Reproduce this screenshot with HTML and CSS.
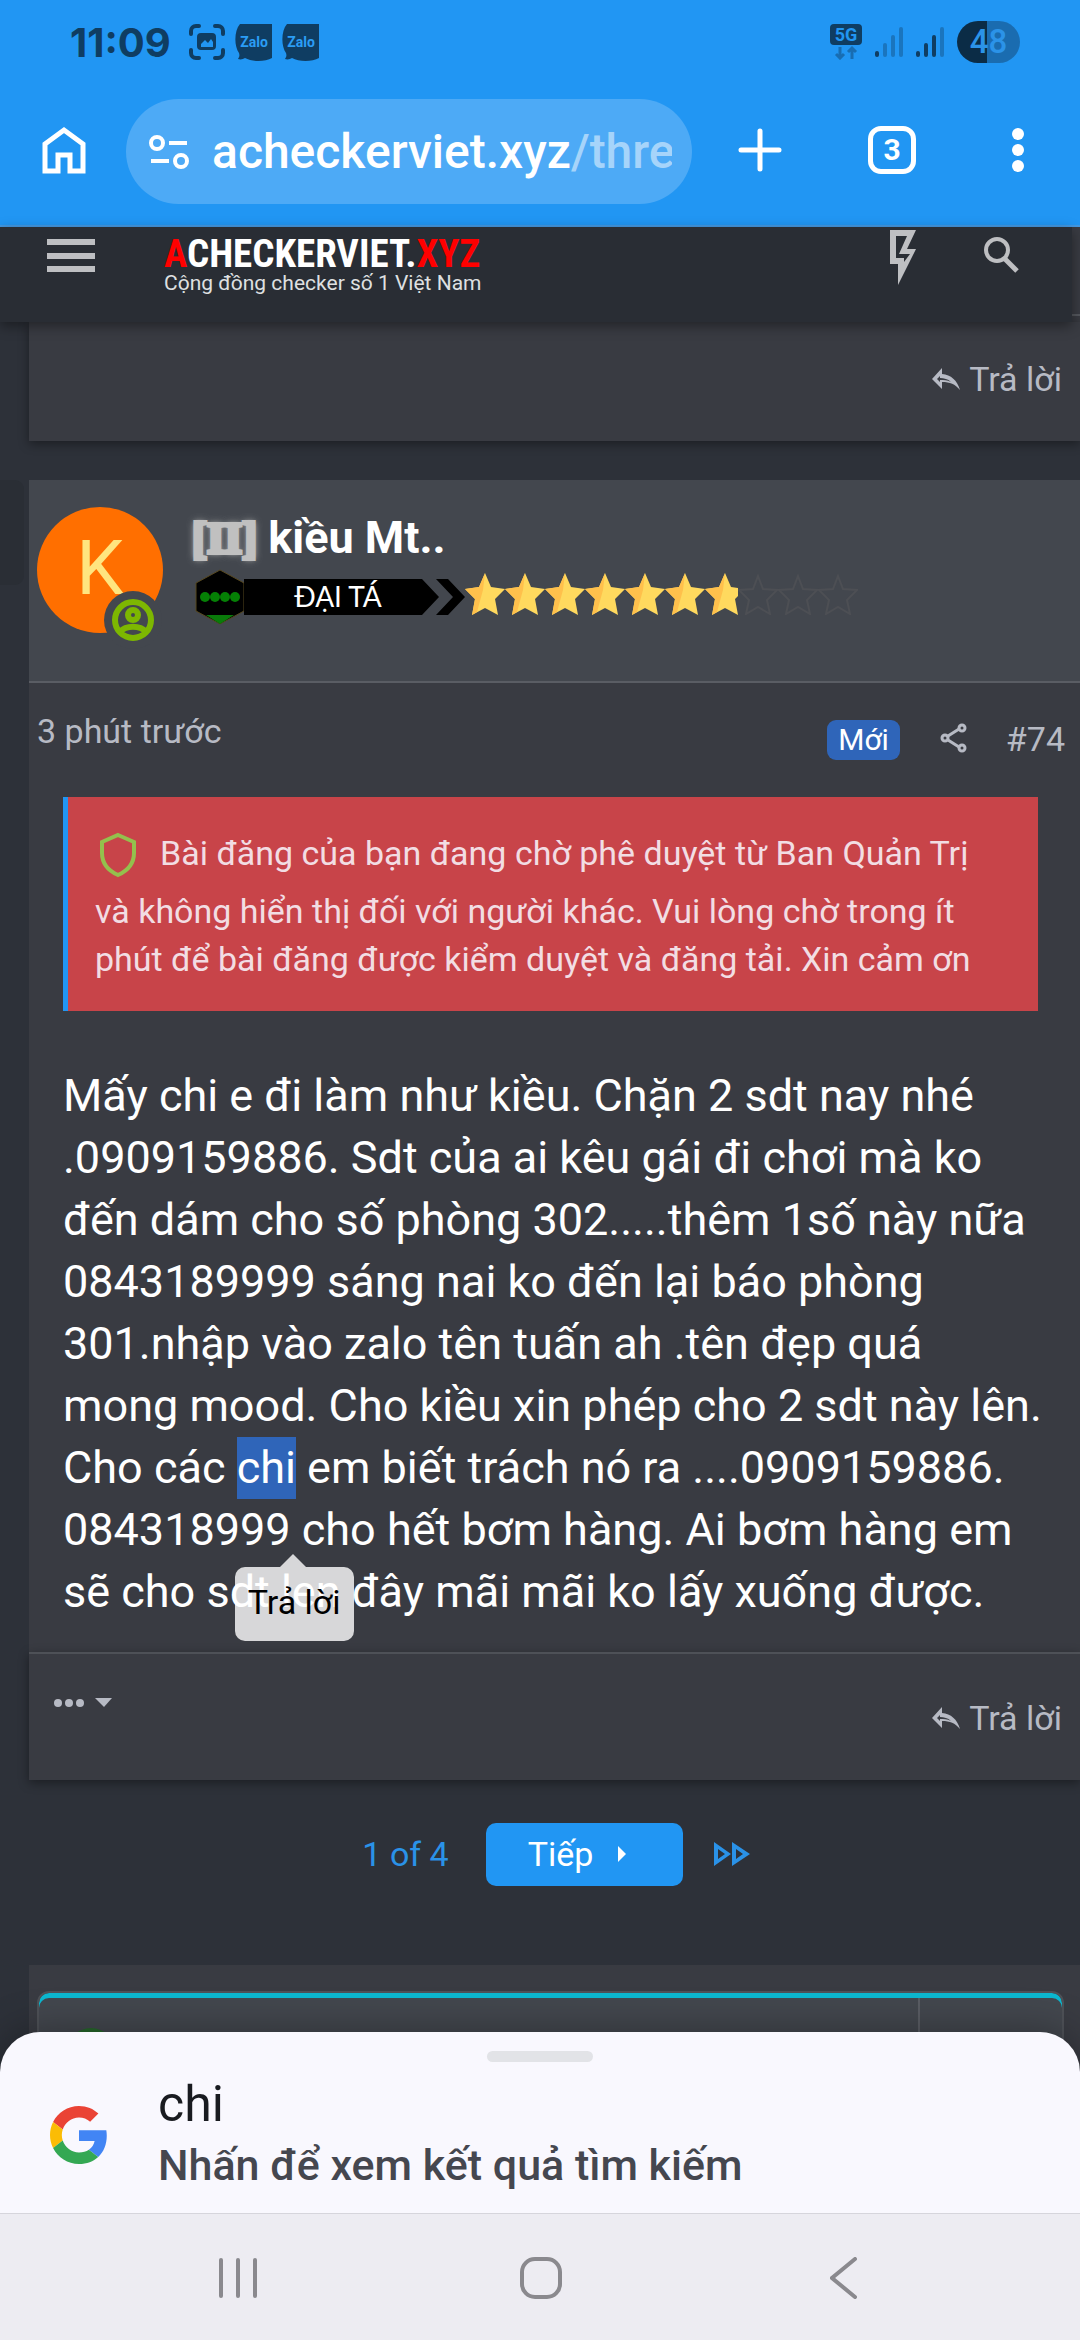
FILE: index.html
```html
<!DOCTYPE html>
<html lang="vi">
<head>
<meta charset="utf-8">
<meta name="viewport" content="width=device-width, initial-scale=1">
<title>ACHECKERVIET.XYZ</title>
<link rel="stylesheet" href="styles.css">
</head>
<body>
<svg class="defs" aria-hidden="true">
  <symbol id="reply" viewBox="0 0 28 24">
    <path d="M0 12 10 1v6c9 1 15 6 18 16-5-6-10-8-18-8v7z" fill="currentColor"/>
    <path d="M5 12l3-3v2c4 0 8 1 11 4-4-2-7-2-11-2v2z" fill="#393b42"/>
  </symbol>
  <symbol id="zalo" viewBox="0 0 37 37">
    <path d="M5 0h32v34c-7 4-20 4-27 0-2 1-4 2-7 1 1-2 2-3 1-6-5-7-5-22 1-29z" fill="#0f3d62"/>
    <text x="19" y="23" text-anchor="middle" class="zalo-text">Zalo</text>
  </symbol>
  <symbol id="star" viewBox="0 0 40 42">
    <path d="M20 0l6 14 14 2-10 10 3 16-13-7-13 7 3-16L0 16l14-2z" fill="#ffd95e"/>
    <path d="M20 0l-6 14-14 2 10 10-3 16 5-3 6-22z" fill="#ffc04c"/>
  </symbol>
  <symbol id="star-empty" viewBox="0 0 40 42">
    <path d="M20 3l5 13 14 1-10 10 3 14-12-7-12 7 3-14L1 17l14-1z" fill="none" stroke="#4d4f54" stroke-width="2"/>
  </symbol>
</svg>

<div class="status">
  <time class="clock">11:09</time>
  <svg width="36" height="36" viewBox="0 0 36 36" fill="none" stroke="#0f3d62" stroke-width="4" stroke-linecap="round"><path d="M2 10V7a5 5 0 0 1 5-5h3M26 2h3a5 5 0 0 1 5 5v3M34 26v3a5 5 0 0 1-5 5h-3M10 34H7a5 5 0 0 1-5-5v-3"/><rect x="8" y="9" width="19" height="17" rx="4" fill="#0f3d62" stroke="none"/><path d="M12 23v-3l4-4 3 3 3-4 2 3v5z" fill="#2196f3" stroke="none"/></svg>
  <svg width="37" height="37"><use href="#zalo"/></svg>
  <svg width="37" height="37"><use href="#zalo"/></svg>
  <div class="signals">
    <svg width="32" height="36" viewBox="0 0 32 36"><rect width="32" height="21" rx="4" fill="#0f3d62"/><text x="16" y="17" text-anchor="middle" class="net-text">5G</text><path d="M10 23v11M6 30l4 4 4-4M22 35V24M18 28l4-4 4 4" fill="none" stroke="#186db2" stroke-width="3"/></svg>
    <svg width="28" height="30" viewBox="0 0 28 30" stroke-width="4" stroke-linecap="round"><path d="M2 26v2" stroke="#0f3d62"/><path d="M10 18v10M18 10v18M26 2v26" stroke="#1a75be"/></svg>
    <svg width="28" height="30" viewBox="0 0 28 30" stroke-width="4" stroke-linecap="round"><path d="M2 26v2M10 18v10M18 10v18" stroke="#0f3d62"/><path d="M26 2v26" stroke="#1a75be"/></svg>
    <span class="battery">48</span>
  </div>
</div>

<div class="toolbar">
  <button class="tool" aria-label="Trang chủ"><svg width="44" height="48" viewBox="0 0 44 48" fill="none" stroke="#fff" stroke-width="5"><path d="M3 45V18L22 4l19 14v27H28V29H16v16z"/></svg></button>
  <div class="omnibox">
    <svg width="40" height="34" viewBox="0 0 40 34" fill="none" stroke="#fff" stroke-width="4"><circle cx="8" cy="8" r="6"/><circle cx="32" cy="26" r="6"/><path d="M20 8h18M2 26h18"/></svg>
    <div class="url">acheckerviet.xyz<span>/thre</span></div>
  </div>
  <button class="tool" aria-label="Thẻ mới"><svg width="44" height="44" viewBox="0 0 44 44" stroke="#fff" stroke-width="5" stroke-linecap="round"><path d="M22 3v38M3 22h38"/></svg></button>
  <button class="tool tabs">3</button>
  <button class="tool" aria-label="Menu"><svg width="12" height="44" viewBox="0 0 12 44" fill="#fff"><circle cx="6" cy="6" r="6"/><circle cx="6" cy="22" r="6"/><circle cx="6" cy="38" r="6"/></svg></button>
</div>

<main class="page">
  <div class="sitebar-wrap">
    <header class="sitebar">
      <button class="tool" aria-label="Mở menu"><svg width="48" height="34" viewBox="0 0 48 34" fill="#bebfc2"><path d="M0 0h48v6H0zM0 14h48v6H0zM0 27h48v6H0z"/></svg></button>
      <a class="logo" href="#"><strong><em>A</em>CHECKERVIET.<em>XYZ</em></strong><small>Cộng đồng checker số 1 Việt Nam</small></a>
      <button class="tool" aria-label="Có gì mới"><svg width="28" height="56" viewBox="0 0 28 56"><path d="M1 0h26l-9 19h9L9 55V34H1zM7 6v22h8v4l6-8H10l8-18z" fill="#bebfc2" fill-rule="evenodd"/></svg></button>
      <button class="tool" aria-label="Tìm kiếm"><svg width="36" height="38" viewBox="0 0 36 38" fill="none" stroke="#bebfc2" stroke-width="4"><circle cx="14" cy="14" r="11"/><path d="M22 23l12 12" stroke-width="5"/></svg></button>
    </header>
  </div>

  <div class="thread">
    <footer class="post-end">
      <a class="reply" href="#"><svg width="28" height="24"><use href="#reply"/></svg>Trả lời</a>
    </footer>

    <article class="post">
      <span class="tail"></span>
      <header class="user">
        <div class="avatar">K<svg class="online" width="58" height="58" viewBox="0 0 58 58"><circle cx="29" cy="29" r="29" fill="#43474e"/><g fill="none" stroke="#7db701" stroke-width="6"><circle cx="29" cy="29" r="18"/><circle cx="29" cy="24" r="5"/><path d="M16 41c6-7 20-7 26 0"/></g></svg></div>
        <div class="who">
          <h2 class="name"><span>[II]</span> kiều Mt..</h2>
          <div class="rank">
            <svg width="270" height="56" viewBox="0 0 270 56"><path d="M25 1l24 13v28L25 55 1 42V14z" fill="#000" stroke="#57481f" stroke-width="1"/><path d="M11 46h28l-14 9z" fill="#0a7a0a"/><g fill="#058005"><circle cx="10" cy="28" r="5"/><circle cx="20" cy="28" r="5"/><circle cx="30" cy="28" r="5"/><circle cx="40" cy="28" r="5"/></g><path d="M49 10h178l17 18-17 18H49zM241 10h12l17 18-17 18h-12l17-18z" fill="#000"/><text x="143" y="38" text-anchor="middle" class="rank-text">ĐẠI TÁ</text></svg>
            <span class="stars"><svg><use href="#star"/></svg><svg><use href="#star"/></svg><svg><use href="#star"/></svg><svg><use href="#star"/></svg><svg><use href="#star"/></svg><svg><use href="#star"/></svg><svg><use href="#star"/></svg></span>
            <span class="stars empty"><svg><use href="#star-empty"/></svg><svg><use href="#star-empty"/></svg><svg><use href="#star-empty"/></svg></span>
          </div>
        </div>
      </header>
      <div class="meta">
        <time>3 phút trước</time>
        <span class="new">Mới</span>
        <a href="#" aria-label="Chia sẻ"><svg width="28" height="30" viewBox="0 0 28 30" fill="none" stroke="#b7bac4" stroke-width="3"><circle cx="5" cy="15" r="3"/><circle cx="22" cy="5" r="3"/><circle cx="22" cy="25" r="3"/><path d="M8 13l11-7M8 17l11 7"/></svg></a>
        <a class="num" href="#">#74</a>
      </div>
      <div class="alert"><svg width="38" height="46" viewBox="0 0 38 46"><path d="M19 3l16 7v11c0 11-7 18-16 22C10 39 3 32 3 21V10z" fill="none" stroke="#94c04d" stroke-width="4"/></svg>Bài đăng của bạn đang chờ phê duyệt từ Ban Quản Trị và không hiển thị đối với người khác. Vui lòng chờ trong ít phút để bài đăng được kiểm duyệt và đăng tải. Xin cảm ơn</div>
      <p class="text">Mấy chi e đi làm như kiều. Chặn 2 sdt nay nhé .0909159886. Sdt của ai kêu gái đi chơi mà ko đến dám cho số phòng 302.....thêm 1số này nữa 0843189999 sáng nai ko đến lại báo phòng 301.nhập vào zalo tên tuấn ah .tên đẹp quá<br>mong mood. Cho kiều xin phép cho 2 sdt này lên. Cho các <mark>chi<button class="tip">Trả lời</button></mark> em biết trách nó ra ....0909159886. 084318999 cho hết bơm hàng. Ai bơm hàng em sẽ cho sdt len đây mãi mãi ko lấy xuống được.</p>
      <footer class="actions">
        <button class="tool" aria-label="Thêm"><svg width="58" height="10" viewBox="0 0 58 10" fill="#b7bac4"><circle cx="4" cy="5" r="4"/><circle cx="15" cy="5" r="4"/><circle cx="26" cy="5" r="4"/><path d="M41 0h17l-8 9z"/></svg></button>
        <a class="reply" href="#"><svg width="28" height="24"><use href="#reply"/></svg>Trả lời</a>
      </footer>
    </article>

    <nav class="pages">
      <a href="#">1 of 4</a>
      <a class="next" href="#">Tiếp<svg width="8" height="16" viewBox="0 0 8 16"><path d="M0 0l8 8-8 8z" fill="#fff"/></svg></a>
      <a href="#" aria-label="Trang cuối"><svg width="36" height="24" viewBox="0 0 36 24"><path d="M0 0l17 12L0 24zM4 7v10l7-5zM18 0l18 12-18 12zM22 7v10l7-5z" fill="#2a92e8" fill-rule="evenodd"/></svg></a>
    </nav>

    <section class="quick">
      <div class="editor"><div class="editor-main"><span class="dot"></span></div><div class="editor-side"></div></div>
    </section>
  </div>
</main>

<section class="sheet">
  <span class="handle"></span>
  <svg width="58" height="60" viewBox="0 0 48 48"><path fill="#EA4335" d="M24 9.500c3.540 0 6.710 1.220 9.210 3.600l6.850-6.850C35.900 2.380 30.470 0 24 0 14.620 0 6.510 5.380 2.560 13.220l7.980 6.190C12.430 13.720 17.740 9.500 24 9.500z"/><path fill="#4285F4" d="M46.980 24.550c0-1.570-.15-3.090-.38-4.550H24v9.020h12.940c-.58 2.960-2.260 5.480-4.780 7.180l7.730 6c4.510-4.180 7.090-10.360 7.090-17.650z"/><path fill="#FBBC05" d="M10.530 28.590c-.48-1.450-.76-2.990-.76-4.590s.27-3.140.76-4.590l-7.980-6.190C.92 16.460 0 20.120 0 24c0 3.880.92 7.540 2.560 10.780z"/><path fill="#34A853" d="M24 48c6.480 0 11.930-2.130 15.890-5.810l-7.730-6c-2.150 1.450-4.920 2.300-8.160 2.300-6.260 0-11.570-4.220-13.470-9.910l-7.980 6.190C6.510 42.620 14.620 48 24 48z"/></svg>
  <div class="result"><strong>chi</strong><span>Nhấn để xem kết quả tìm kiếm</span></div>
</section>

<nav class="sysnav">
  <button class="tool" aria-label="Gần đây"><svg width="40" height="42" viewBox="0 0 40 42" stroke="#8a898e" stroke-width="4" stroke-linecap="round"><path d="M3 3v36M20 3v36M37 3v36"/></svg></button>
  <button class="tool" aria-label="Màn hình chính"><svg width="42" height="42" viewBox="0 0 42 42"><rect x="2" y="2" width="38" height="38" rx="13" fill="none" stroke="#8a898e" stroke-width="4"/></svg></button>
  <button class="tool" aria-label="Quay lại"><svg width="28" height="42" viewBox="0 0 28 42" fill="none" stroke="#8a898e" stroke-width="4" stroke-linecap="round"><path d="M25 2L2 21l23 19"/></svg></button>
</nav>
</body>
</html>
```
FILE: styles.css
```css
* { box-sizing: border-box; }

body {
  margin: 0;
  min-height: 100vh;
  display: flex;
  flex-direction: column;
  background: #2d3139;
  font-family: Roboto, sans-serif;
  font-size: 34px;
  color: #b7bac4;
}

svg { display: block; flex: none; }
a { color: inherit; text-decoration: none; }
.defs { position: absolute; width: 0; height: 0; }

.tool {
  padding: 0;
  border: 0;
  background: none;
  color: inherit;
  font: inherit;
}

/* Status bar */
.status {
  display: flex;
  align-items: center;
  height: 84px;
  padding: 0 60px 0 70px;
  gap: 10px;
  background: #2196f3;
}
.clock { font: 700 40px Inter, sans-serif; color: #0f3d62; margin-right: 8px; }
.signals { display: flex; align-items: center; gap: 13px; margin-left: auto; }
.zalo-text { font: 700 14px Roboto, sans-serif; fill: #2b9df5; }
.net-text { font: 700 18px Roboto, sans-serif; fill: #2196f3; }
.battery {
  width: 63px;
  height: 42px;
  border-radius: 21px;
  background: linear-gradient(90deg, #0b2c46 48%, #1a6cb0 48%);
  color: #2b93e8;
  font: 500 33px/42px Roboto, sans-serif;
  text-align: center;
}

/* Browser toolbar */
.toolbar {
  display: flex;
  align-items: center;
  height: 143px;
  padding: 0 56px 10px 42px;
  background: #2196f3;
  border-bottom: 2px solid #4398e2;
}
.toolbar .tool { flex: none; }
.omnibox {
  flex: 1;
  min-width: 0;
  display: flex;
  align-items: center;
  gap: 23px;
  height: 105px;
  margin: 4px 46px 0 40px;
  padding: 0 20px 0 23px;
  border-radius: 53px;
  background: #4daaf6;
}
.url {
  flex: 1;
  overflow: hidden;
  white-space: nowrap;
  font: 500 48px/64px Roboto, sans-serif;
  color: #fff;
}
.url span { color: #a6d4fa; }
.toolbar .tabs {
  width: 48px;
  height: 48px;
  margin: 0 96px 0 86px;
  border: 5px solid #fff;
  border-radius: 13px;
  color: #fff;
  font: 700 30px/36px Roboto, sans-serif;
}

/* Site header */
.page { flex: 1 0 auto; }
.sitebar-wrap {
  background: linear-gradient(#393b42 87px, #55585e 87px, #55585e 89px, #393b42 89px);
}
.sitebar {
  position: relative;
  display: flex;
  align-items: flex-start;
  height: 95px;
  margin-right: 8px;
  padding: 3px 53px 0 47px;
  background: #292d34;
  box-shadow: 0 4px 12px rgba(0, 0, 0, .4);
}
.sitebar .tool:first-child { margin-top: 9px; }
.sitebar .tool:last-child { margin: 6px 0 0 66px; }
.logo { flex: 1; margin: 5px 0 0 69px; }
.logo strong, .logo small { display: block; white-space: nowrap; }
.logo strong { font: 700 39px/38px "Roboto Condensed", Roboto, sans-serif; color: #fff; }
.logo em { font-style: normal; color: #f00; }
.logo small { font: 400 21px/21px Roboto, sans-serif; color: #dfe0e1; }

/* Thread */
.thread { padding-left: 29px; }
.post-end, .actions {
  display: flex;
  justify-content: flex-end;
  background: #393b42;
  box-shadow: 0 3px 10px rgba(0, 0, 0, .4);
}
.post-end { height: 119px; padding: 37px 18px 0 0; margin-bottom: 39px; }
.reply { display: flex; align-items: center; gap: 9px; height: 40px; }

.post { position: relative; background: #393b42; }
.tail {
  position: absolute;
  left: -29px;
  top: 0;
  width: 24px;
  height: 105px;
  border-radius: 0 9px 9px 0;
  background: #2a2e35;
}
.user {
  display: flex;
  gap: 24px;
  height: 203px;
  padding: 27px 8px 0;
  background: #43474e;
  border-bottom: 2px solid #5a5d64;
}
.avatar {
  position: relative;
  flex: none;
  width: 126px;
  height: 126px;
  border-radius: 50%;
  background: #ff6f00;
  color: #ffe57f;
  font-size: 76px;
  line-height: 122px;
  text-align: center;
}
.online { position: absolute; left: 67px; top: 84px; }
.name { margin: 6px 0 6px 5px; font-size: 45px; line-height: 50px; color: #fff; font-weight: 700; white-space: nowrap; }
.name span {
  font-family: "Liberation Serif", serif;
  -webkit-text-stroke: 4px #c0c0c0;
  color: #c0c0c0;
  text-shadow: 0 0 4px #c0c0c0, 0 0 8px #c0c0c0;
}
.rank { display: flex; padding-left: 8px; }
.rank-text { font: 400 28px Lato, sans-serif; fill: #fff; }
.stars { display: flex; width: 273px; padding-top: 4px; overflow: hidden; }
.stars svg { width: 40px; height: 42px; }
.stars.empty { width: 120px; }

.meta {
  display: flex;
  align-items: flex-start;
  height: 114px;
  padding: 28px 15px 0 8px;
}
.meta time { flex: 1; line-height: 40px; }
.meta a { margin: 12px 0 0 40px; }
.new {
  margin-top: 9px;
  padding: 0 11px;
  border-radius: 9px;
  background: #2f65b9;
  color: #fff;
  font-size: 30px;
  line-height: 40px;
}
.meta .num { margin: 8px 0 0; padding-left: 38px; line-height: 40px; }

.alert {
  margin: 0 42px 0 34px;
  padding: 29px 30px 28px 27px;
  border-left: 5px solid #2196f3;
  background: #c84449;
  color: #f2dde3;
  line-height: 48px;
}
.alert svg { display: inline-block; margin: 6px 23px 9px 4px; vertical-align: middle; }

.text {
  margin: 0;
  padding: 54px 34px 29px;
  font-size: 45px;
  line-height: 62px;
  color: #fff;
}
.text mark { position: relative; display: inline-block; background: #2f65b9; color: #fff; }
.tip {
  position: absolute;
  left: -2px;
  top: 130px;
  width: 119px;
  height: 74px;
  padding: 0 0 5px;
  border: 0;
  border-radius: 10px;
  background: rgba(255, 255, 255, .8);
  color: #000;
  font: 400 34px Roboto, sans-serif;
}
.tip::before {
  content: "";
  position: absolute;
  left: 45px;
  top: -13px;
  border: 13px solid transparent;
  border-top: 0;
  border-bottom-color: rgba(255, 255, 255, .8);
}

.actions {
  justify-content: space-between;
  align-items: flex-start;
  height: 128px;
  padding: 44px 18px 0 25px;
  border-top: 2px solid #4e5157;
}

/* Pagination */
.pages {
  display: flex;
  align-items: center;
  justify-content: center;
  gap: 31px;
  height: 185px;
  padding: 0 0 37px 3px;
  color: #2a92e8;
}
.pages .next {
  display: flex;
  align-items: center;
  gap: 25px;
  width: 197px;
  height: 63px;
  margin-left: 6px;
  padding-left: 42px;
  border-radius: 10px;
  background: #2196f3;
  color: #fff;
}

.quick { padding: 26px 16px 0 8px; background: #393b42; }
.editor {
  display: flex;
  height: 76px;
  border: 2px solid #4e5157;
  border-radius: 12px;
  background: #43474e;
  overflow: hidden;
  box-shadow: inset 0 5px #0cb8d0;
}
.editor-main { flex: 1; margin-top: 5px; padding: 30px 0 0 27px; border-right: 2px solid #5a5d64; }
.editor-side { width: 142px; }
.dot { display: block; width: 50px; height: 50px; border-radius: 50%; background: #26662b; }

/* Search sheet */
.sheet {
  position: relative;
  display: flex;
  align-items: center;
  gap: 50px;
  height: 181px;
  margin-top: -40px;
  padding: 25px 50px 0;
  border-radius: 40px 40px 0 0;
  background: #f9f8fe;
  box-shadow: 0 0 40px rgba(0, 0, 0, .35);
}
.handle {
  position: absolute;
  top: 19px;
  left: calc(50% - 53px);
  width: 106px;
  height: 11px;
  border-radius: 6px;
  background: #e2e3e7;
}
.result strong, .result span { display: block; font-weight: 500; line-height: 61px; }
.result strong { font-size: 50px; font-weight: 400; color: #191b20; }
.result span { font-size: 43px; color: #45474f; }

/* System navigation */
.sysnav {
  position: relative;
  display: grid;
  grid-template-columns: repeat(3, 1fr);
  place-items: center;
  height: 127px;
  padding: 2px 85px 0 87px;
  background: #edecf2;
  border-top: 1px solid #d6d5dc;
}
```
